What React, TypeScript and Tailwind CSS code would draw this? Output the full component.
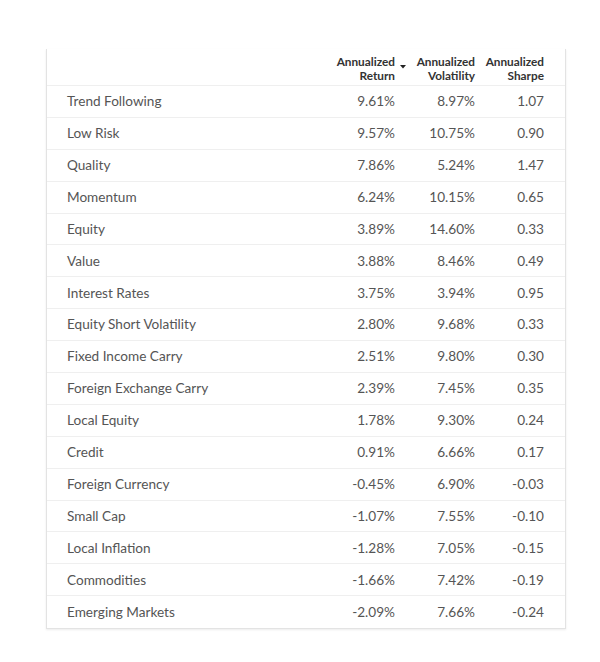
import React from "react";

const rows: [string, string, string, string][] = [
  ["Trend Following", "9.61%", "8.97%", "1.07"],
  ["Low Risk", "9.57%", "10.75%", "0.90"],
  ["Quality", "7.86%", "5.24%", "1.47"],
  ["Momentum", "6.24%", "10.15%", "0.65"],
  ["Equity", "3.89%", "14.60%", "0.33"],
  ["Value", "3.88%", "8.46%", "0.49"],
  ["Interest Rates", "3.75%", "3.94%", "0.95"],
  ["Equity Short Volatility", "2.80%", "9.68%", "0.33"],
  ["Fixed Income Carry", "2.51%", "9.80%", "0.30"],
  ["Foreign Exchange Carry", "2.39%", "7.45%", "0.35"],
  ["Local Equity", "1.78%", "9.30%", "0.24"],
  ["Credit", "0.91%", "6.66%", "0.17"],
  ["Foreign Currency", "-0.45%", "6.90%", "-0.03"],
  ["Small Cap", "-1.07%", "7.55%", "-0.10"],
  ["Local Inflation", "-1.28%", "7.05%", "-0.15"],
  ["Commodities", "-1.66%", "7.42%", "-0.19"],
  ["Emerging Markets", "-2.09%", "7.66%", "-0.24"],
];

export default function App() {
  return (
    <div
      className="w-[600px] h-[662px] bg-white pt-[49px]"
      style={{ fontFamily: "Lato, 'Open Sans', sans-serif" }}
    >
      <div className="ml-[46px] w-[520px] border-x border-b border-[#e3e3e3] shadow-[0_1px_2px_rgba(0,0,0,0.08)]">
        <div className="flex items-end h-[37px] border-b border-[#efefef] pr-[21px] pb-[2px] text-[11.8px] leading-[14px] font-bold text-[#333]">
          <div className="flex-1" />
          <div className="relative text-right">
            <div>Annualized</div>
            <div>Return</div>
            <svg
              className="absolute left-[100%] top-[10px] ml-[5px]"
              width="6"
              height="4"
              viewBox="0 0 6 4"
            >
              <path d="M0 0 L6 0 L3 3.5 Z" fill="#222" />
            </svg>
          </div>
          <div className="w-[80px] text-right">
            <div>Annualized</div>
            <div>Volatility</div>
          </div>
          <div className="w-[69px] text-right">
            <div>Annualized</div>
            <div>Sharpe</div>
          </div>
        </div>
        {rows.map((r, i) => (
          <div
            key={r[0]}
            className={`flex items-center h-[31.9px] pl-[20px] pr-[21px] text-[13.6px] text-[#555] ${
              i < rows.length - 1 ? "border-b border-[#efefef]" : ""
            }`}
          >
            <div className="flex-1">{r[0]}</div>
            <div className="text-right">{r[1]}</div>
            <div className="w-[80px] text-right">{r[2]}</div>
            <div className="w-[69px] text-right">{r[3]}</div>
          </div>
        ))}
      </div>
    </div>
  );
}
